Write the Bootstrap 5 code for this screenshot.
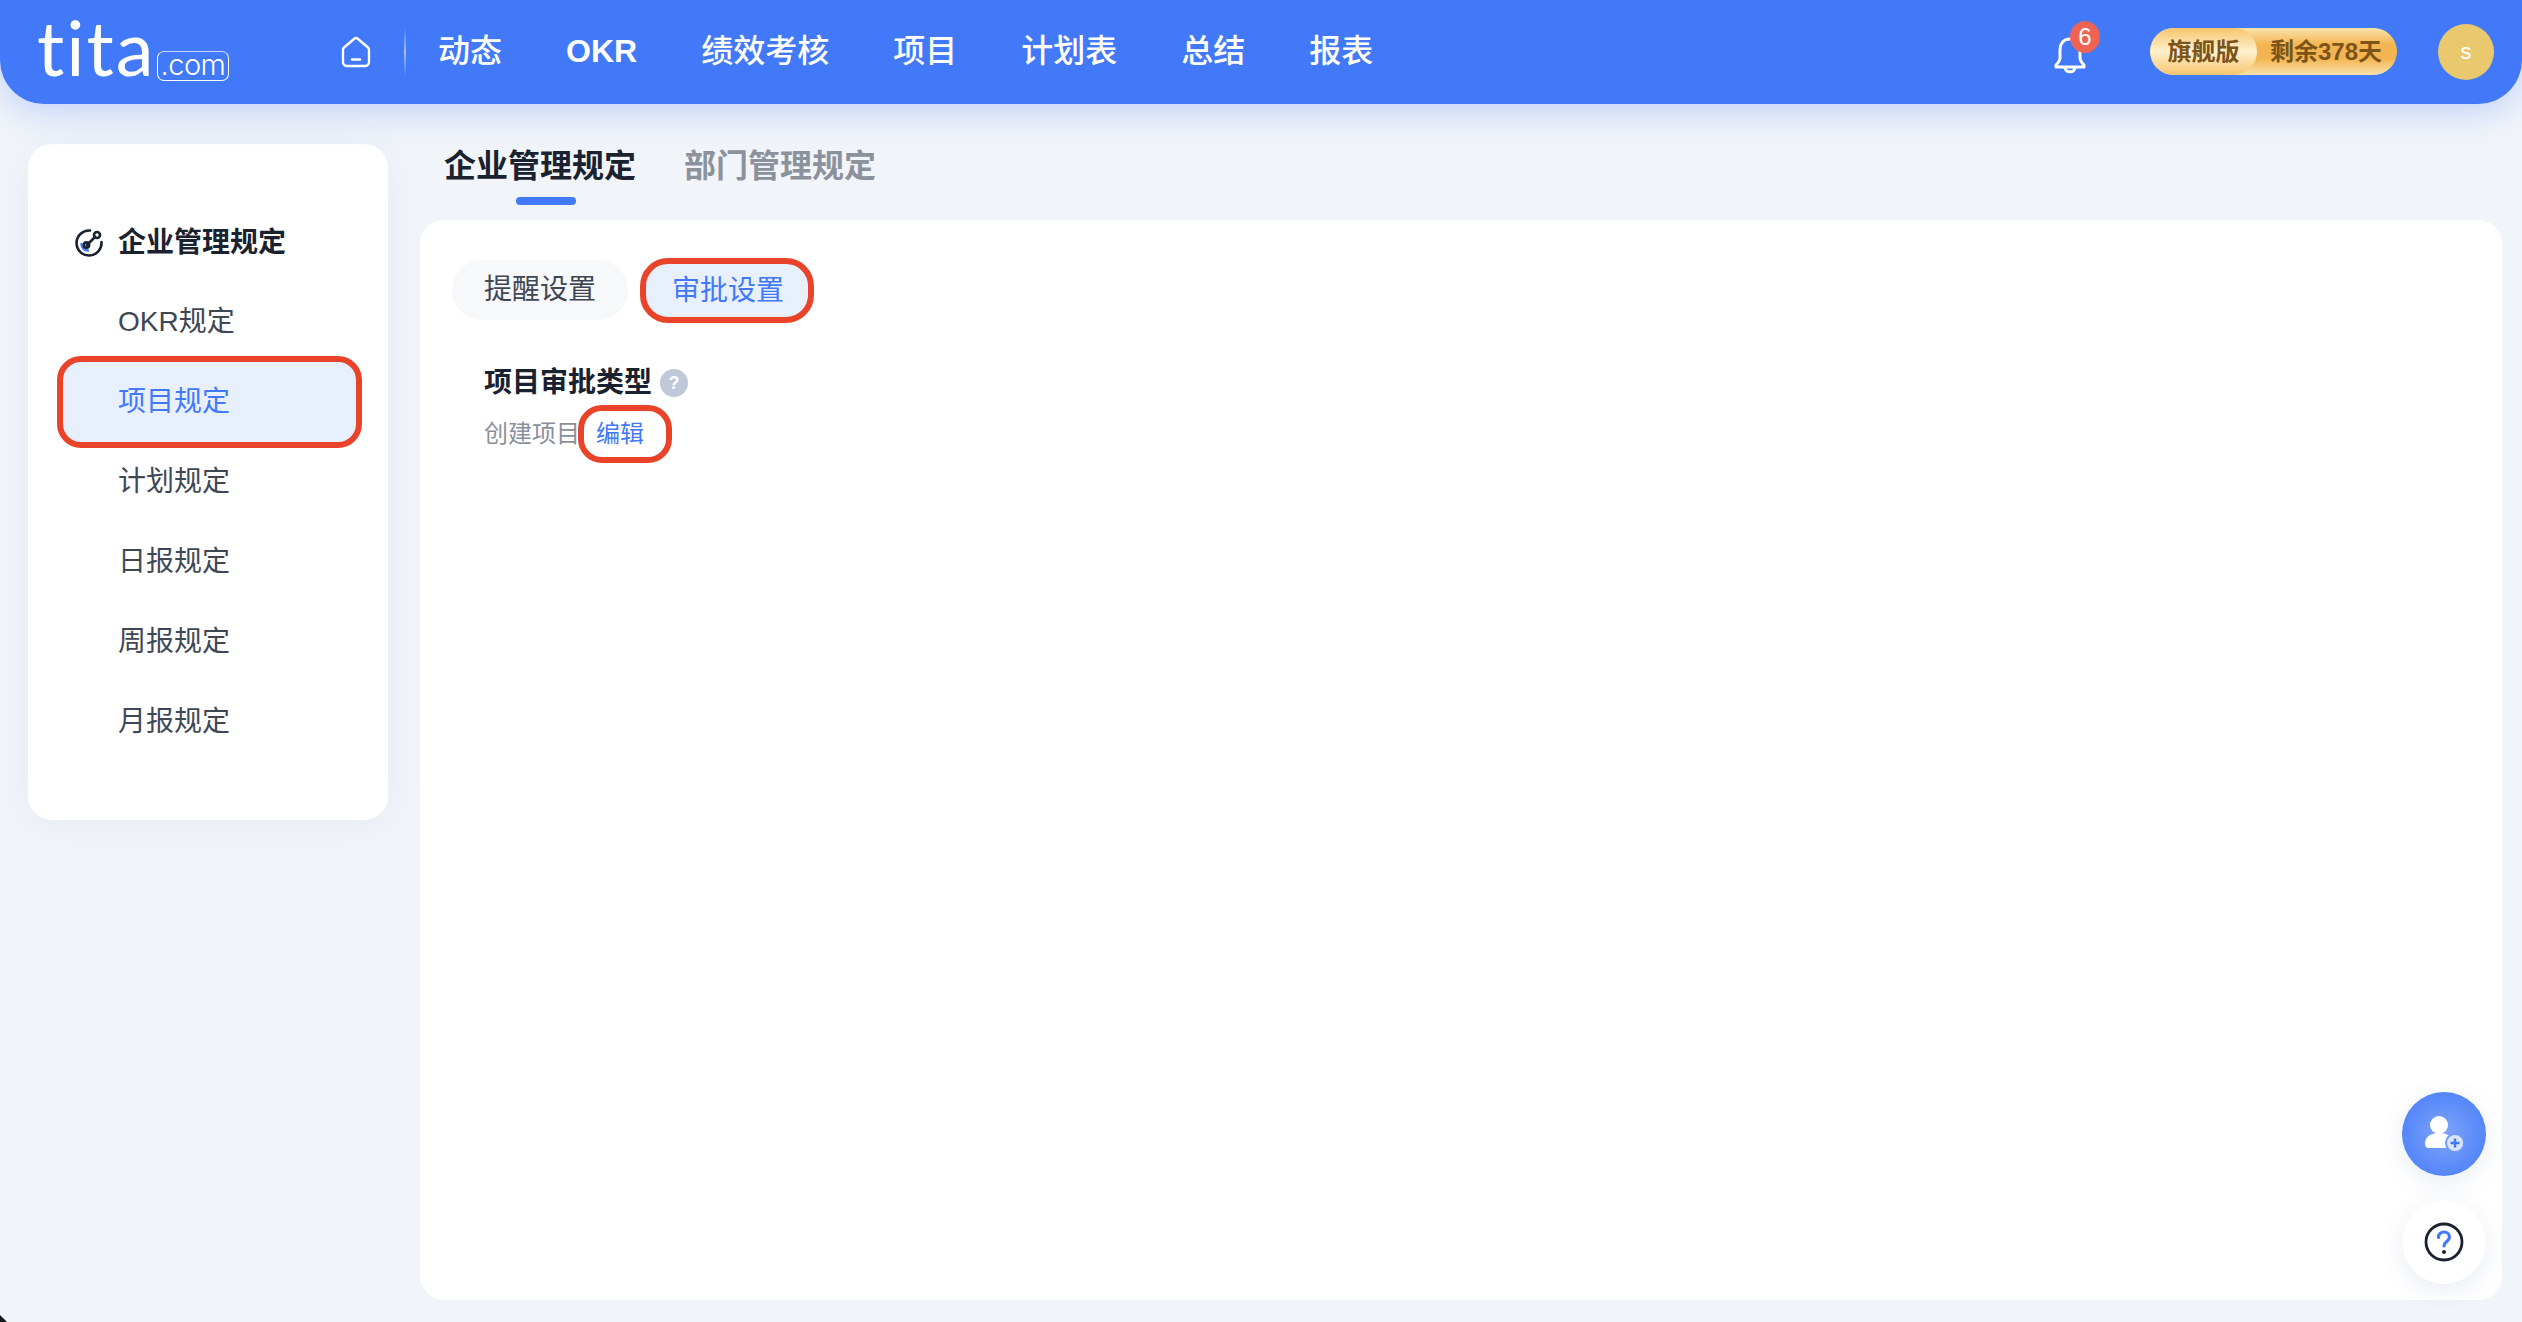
<!DOCTYPE html>
<html lang="zh-CN">
<head>
  <meta charset="UTF-8">
  <title>企业管理规定</title>
  <link href="https://cdn.jsdelivr.net/npm/bootstrap@5.3.0/dist/css/bootstrap.min.css" rel="stylesheet">
  <style>
    html, body { height: 100%; }
    body {
      background: #f1f4f9;
      color: #1a2230;
      font-family: "Liberation Sans", "Noto Sans CJK SC", sans-serif;
      overflow: hidden;
    }
    .app-shell { height: 1322px; }

    /* top bar */
    .top-bar {
      height: 104px;
      padding: 0 28px 0 37px;
      background: #4279f8;
      border-radius: 0 0 44px 44px;
      box-shadow: 0 6px 36px rgba(66, 121, 248, .3);
      flex-wrap: nowrap;
      position: relative;
      z-index: 2;
    }
    .logo-box { width: 193px; height: 50px; color: #fff; line-height: 1; }
    .logo-tita { font-family: "Lato", sans-serif; font-size: 76px; font-weight: 400; letter-spacing: 2px; margin-top: -10px; }
    .logo-com {
      font-family: "Inter", sans-serif; font-size: 29px; font-weight: 300;
      border: 1.5px solid #fff; border-radius: 7px; border-top-color: rgba(255,255,255,.7);
      padding: 0 3px 1px; margin-left: 1px; margin-top: 28px; height: 30px; line-height: 26px; letter-spacing: -.5px;
    }
    .home-link { margin-left: 111px; width: 30px; height: 32px; margin-top: -1px; }
    .bar-line { width: 2px; height: 48px; margin: 0 32px 0 33px; background: linear-gradient(transparent, rgba(255,255,255,.55), transparent); }
    .top-menu { gap: 64px; margin-top: -2px; }
    .top-menu a { color: #fff; font-size: 32px; font-weight: 500; text-decoration: none; line-height: 44px; white-space: nowrap; }
    .top-menu a.latin { font-weight: 700; }
    .bell-wrap { position: relative; width: 34px; height: 40px; margin-right: 63px; margin-top: 8px; }
    .bell-count {
      position: absolute; top: -15px; right: -13px;
      width: 30px; height: 32px; border-radius: 50%;
      background: #ee6352; color: #fff; font-size: 24px; line-height: 32px; text-align: center;
    }
    .plan-pill {
      width: 247px; height: 47px; border-radius: 24px; overflow: hidden; margin-top: -2px;
      color: #7c5419; font-size: 24px; font-weight: 700; white-space: nowrap;
      background: linear-gradient(#fbe3ac, #f3b551 35%, #f3b551 65%, #fbe3ac);
    }
    .plan-name {
      width: 107px; height: 47px; border-radius: 24px; text-align: center; line-height: 47px;
      background: linear-gradient(#f6c56c, #fff0cf 50%, #f6c56c);
    }
    .plan-left { flex: 1; text-align: center; line-height: 47px; padding-right: 2px; }
    .user-dot {
      width: 56px; height: 56px; margin-left: 41px; border-radius: 50%;
      background: #e9c86e; color: #fff; font-size: 22px; line-height: 56px; text-align: center;
    }

    /* side menu */
    .page-body { height: 1218px; padding: 40px 20px 22px 28px; }
    .side-panel {
      width: 360px; height: 676px; padding: 60px 26px 0 30px; flex: none;
      background: #fff; border-radius: 24px; border: 0;
      box-shadow: 0 4px 40px rgba(60, 90, 160, .06);
    }
    .side-head { height: 79px; margin-top: -1px; font-size: 28px; font-weight: 700; line-height: 80px; color: #1a2230; margin-left: 16px; gap: 14px; }
    .side-list .list-group-item {
      height: 80px; padding: 0 0 0 60px; border: 0; background: transparent;
      font-size: 28px; line-height: 80px; color: #3f4755;
    }
    .side-list .list-group-item.on {
      height: 92px; margin: -6px 0 -6px -1px; line-height: 80px; border: 6px solid #e9432a; border-radius: 24px; padding-left: 55px;
      background: #e8f0fe; color: #4279f8; z-index: 1;
    }

    /* right part */
    .right-part { margin-left: 32px; min-width: 0; }
    .rule-tabs { height: 76px; gap: 48px; padding-left: 24px; padding-top: 4px; }
    .rule-tabs a { position: relative; font-size: 32px; font-weight: 700; line-height: 36px; text-decoration: none; color: #8c929c; }
    .rule-tabs a.on { color: #1a2230; }
    .rule-tabs a.on::after {
      content: ""; position: absolute; left: 72px; top: 49px; width: 60px; height: 8px;
      border-radius: 4px; background: #4279f8;
    }
    .main-card { flex: 1; border: 0; border-radius: 24px; background: #fff; padding: 40px 32px; position: relative; }
    .pill-row { gap: 12px; }
    .set-pill {
      height: 60px; padding: 0 32px; border: 0; border-radius: 30px;
      font-size: 28px; line-height: 60px; background: #f7f8fa; color: #3f4755;
    }
    .set-pill.on {
      height: 65px; margin: -2px 0; padding: 0 26px 0 26px; width: 174px; line-height: 53px; white-space: nowrap;
      border: 6px solid #e9432a; background: #e8f0fe; color: #4279f8; border-radius: 28px;
    }
    .type-block { margin: 42px 0 0 32px; }
    .type-title { font-size: 28px; font-weight: 700; line-height: 40px; gap: 8px; }
    .type-help { width: 28px; height: 28px; border-radius: 50%; background: #bec8d8; color: #fff; font-size: 18px; font-weight: 700; line-height: 28px; text-align: center; }
    .type-row { margin-top: 2px; font-size: 24px; color: #8a909a; line-height: 58px; height: 58px; }
    .edit-ring {
      width: 94px; height: 58px; line-height: 46px; padding-left: 12px; margin-left: -2px;
      border: 6px solid #e9432a; border-radius: 24px; color: #4279f8; font-size: 24px; text-decoration: none;
    }
    .float-btns { position: absolute; right: 16px; bottom: 16px; gap: 24px; }
    .float-btn { width: 84px; height: 84px; border-radius: 50%; box-shadow: 0 6px 24px rgba(60, 90, 160, .12); }
    .float-btn.add-user { background: radial-gradient(circle, #7fa5fa 0%, #4279f8 100%); background-color: #4d82f8; }
    .float-btn.ask { background: #fff; }
    .win-corner {
      position: fixed; left: 0; bottom: 0; width: 7px; height: 7px; background: #14161a;
      clip-path: polygon(0 0, 100% 100%, 0 100%);
    }
  </style>
</head>
<body>
  <div class="app-shell d-flex flex-column">

    <!-- top bar -->
    <nav class="navbar top-bar">
      <div class="d-flex align-items-center">
        <div class="logo-box d-flex align-items-center">
          <span class="logo-tita">tita</span>
          <span class="logo-com">.com</span>
        </div>
        <a class="home-link d-flex" href="#">
          <svg width="30" height="32" viewBox="0 0 30 32" fill="none" stroke="#fff" stroke-width="2.4" stroke-linejoin="round" stroke-linecap="round">
            <path d="M3 11.5 13 3a3 3 0 0 1 4 0l10 8.500a3 3 0 0 1 1 2.300V26a4 4 0 0 1-4 4H6a4 4 0 0 1-4-4V13.800a3 3 0 0 1 1-2.300Z"/>
            <path d="M11 23.500h8"/>
          </svg>
        </a>
        <span class="bar-line"></span>
        <div class="top-menu d-flex align-items-center">
          <a href="#">动态</a>
          <a class="latin" href="#">OKR</a>
          <a href="#">绩效考核</a>
          <a href="#">项目</a>
          <a href="#">计划表</a>
          <a href="#">总结</a>
          <a href="#">报表</a>
        </div>
      </div>
      <div class="d-flex align-items-center">
        <div class="bell-wrap">
          <svg width="34" height="38" viewBox="0 0 34 38" fill="none" stroke="#fff" stroke-width="3" stroke-linejoin="round" stroke-linecap="round">
            <path d="M17 3C10 3 7 8 7 14v8c0 3-2 5-4 7v2h28v-2c-2-2-4-4-4-7v-8c0-6-3-11-10-11Z"/>
            <path d="M12 32c1 5 9 5 10 0"/>
          </svg>
          <span class="bell-count">6</span>
        </div>
        <div class="plan-pill d-flex">
          <div class="plan-name">旗舰版</div>
          <div class="plan-left">剩余378天</div>
        </div>
        <div class="user-dot">s</div>
      </div>
    </nav>

    <div class="page-body d-flex">
      <!-- side menu -->
      <aside class="card side-panel">
        <div class="side-head d-flex align-items-center">
          <svg width="30" height="30" viewBox="0 0 30 30" fill="none" stroke-width="2.600" stroke-linecap="round">
            <path d="M16 2.500A12.500 12.500 0 1 0 27.500 14" stroke="#1a2230"/>
            <path d="M7.500 16a7.500 7.500 0 0 0 6.500 6.500" stroke="#4279f8"/>
            <path d="M13 17l8-8" stroke="#1a2230"/>
            <circle cx="12.500" cy="17" r="2.600" stroke="#1a2230"/>
            <circle cx="23" cy="7" r="3" stroke="#1a2230"/>
          </svg>
          <span>企业管理规定</span>
        </div>
        <div class="list-group side-list">
          <a class="list-group-item" href="#">OKR规定</a>
          <a class="list-group-item on" href="#">项目规定</a>
          <a class="list-group-item" href="#">计划规定</a>
          <a class="list-group-item" href="#">日报规定</a>
          <a class="list-group-item" href="#">周报规定</a>
          <a class="list-group-item" href="#">月报规定</a>
        </div>
      </aside>

      <div class="right-part flex-grow-1 d-flex flex-column">
        <div class="rule-tabs d-flex">
          <a class="on" href="#">企业管理规定</a>
          <a href="#">部门管理规定</a>
        </div>
        <div class="card main-card">
          <div class="pill-row d-flex">
            <button class="btn set-pill" type="button">提醒设置</button>
            <button class="btn set-pill on" type="button">审批设置</button>
          </div>
          <div class="type-block">
            <div class="type-title d-flex align-items-center">
              <span>项目审批类型</span>
              <span class="type-help">?</span>
            </div>
            <div class="type-row d-flex">
              <span>创建项目</span>
              <a class="edit-ring" href="#">编辑</a>
            </div>
          </div>

          <div class="float-btns d-flex flex-column">
            <div class="float-btn add-user d-flex align-items-center justify-content-center">
              <svg width="40" height="38" viewBox="0 0 40 38">
                <circle cx="15" cy="10" r="9" fill="#fff"/>
                <path d="M1 29c0-7 5-11 14-11s14 4 14 11c0 3-2 4-4 4H5c-2 0-4-1-4-4Z" fill="#fff"/>
                <circle cx="31" cy="28" r="9" fill="#dbe6fe" stroke="#6e9bfa" stroke-width="2"/>
                <path d="M31 23.500v9M26.500 28h9" stroke="#4279f8" stroke-width="2.400"/>
              </svg>
            </div>
            <div class="float-btn ask d-flex align-items-center justify-content-center">
              <svg width="40" height="40" viewBox="0 0 40 40" fill="none">
                <circle cx="20" cy="20" r="18" stroke="#1a2230" stroke-width="2.800"/>
                <path d="M14.500 15.500c0-3.500 2.500-5.500 5.500-5.500s5.500 2 5.500 5c0 4.500-5.500 4.500-5.500 9" stroke="#4279f8" stroke-width="3.200" stroke-linecap="round"/>
                <circle cx="20" cy="30" r="2" fill="#1a2230"/>
              </svg>
            </div>
          </div>
        </div>
      </div>
    </div>
  </div>
  <div class="win-corner"></div>
  <script src="https://cdn.jsdelivr.net/npm/bootstrap@5.3.0/dist/js/bootstrap.bundle.min.js"></script>
</body>
</html>
